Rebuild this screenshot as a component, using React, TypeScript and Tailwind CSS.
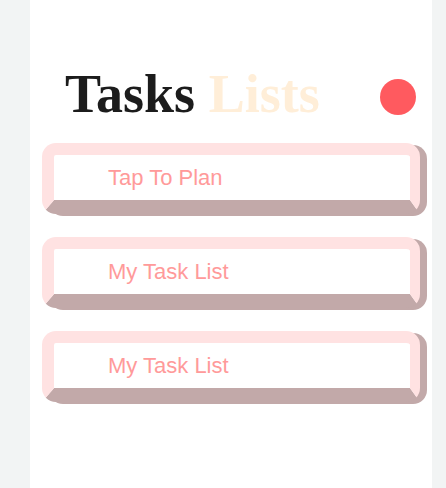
import React from "react";

const tasks = ["Tap To Plan", "My Task List", "My Task List"];

export default function App() {
  return (
    <div className="w-[446px] h-[488px] bg-[#f2f4f4] flex" style={{ fontFamily: '"Liberation Sans", Arial, sans-serif' }}>
      <div className="ml-[30px] mr-[14px] flex-1 bg-white flex flex-col">
        <div className="mt-[67px] flex items-center justify-between pl-[35px] pr-[16px] h-[54px]">
          <h1 className="text-[54px] leading-[54px] font-bold whitespace-nowrap" style={{ fontFamily: '"Liberation Serif", "Times New Roman", serif' }}>
            <span className="text-[#1c1c1c]">Tasks</span>{" "}
            <span className="text-[#ffeed8]">Lists</span>
          </h1>
          <div className="w-[36px] h-[36px] rounded-full bg-[#ff5a5f] mt-[6px]" />
        </div>
        <div className="mt-[22px] flex flex-col gap-[23px] pl-[12px] pr-[12px]">
          {tasks.map((t, i) => (
            <div
              key={i}
              className="h-[71px] rounded-[14px] border-t-[12px] border-l-[12px] border-r-[10px] border-b-[14px] border-t-[#ffe2e2] border-l-[#ffe2e2] border-r-[#ffe2e2] border-b-[#c2a9a9] bg-white flex items-center pl-[54px] shadow-[7px_2px_0_#c2a9a9]"
            >
              <span className="text-[22px] text-[#ff9a9a]">{t}</span>
            </div>
          ))}
        </div>
      </div>
    </div>
  );
}
